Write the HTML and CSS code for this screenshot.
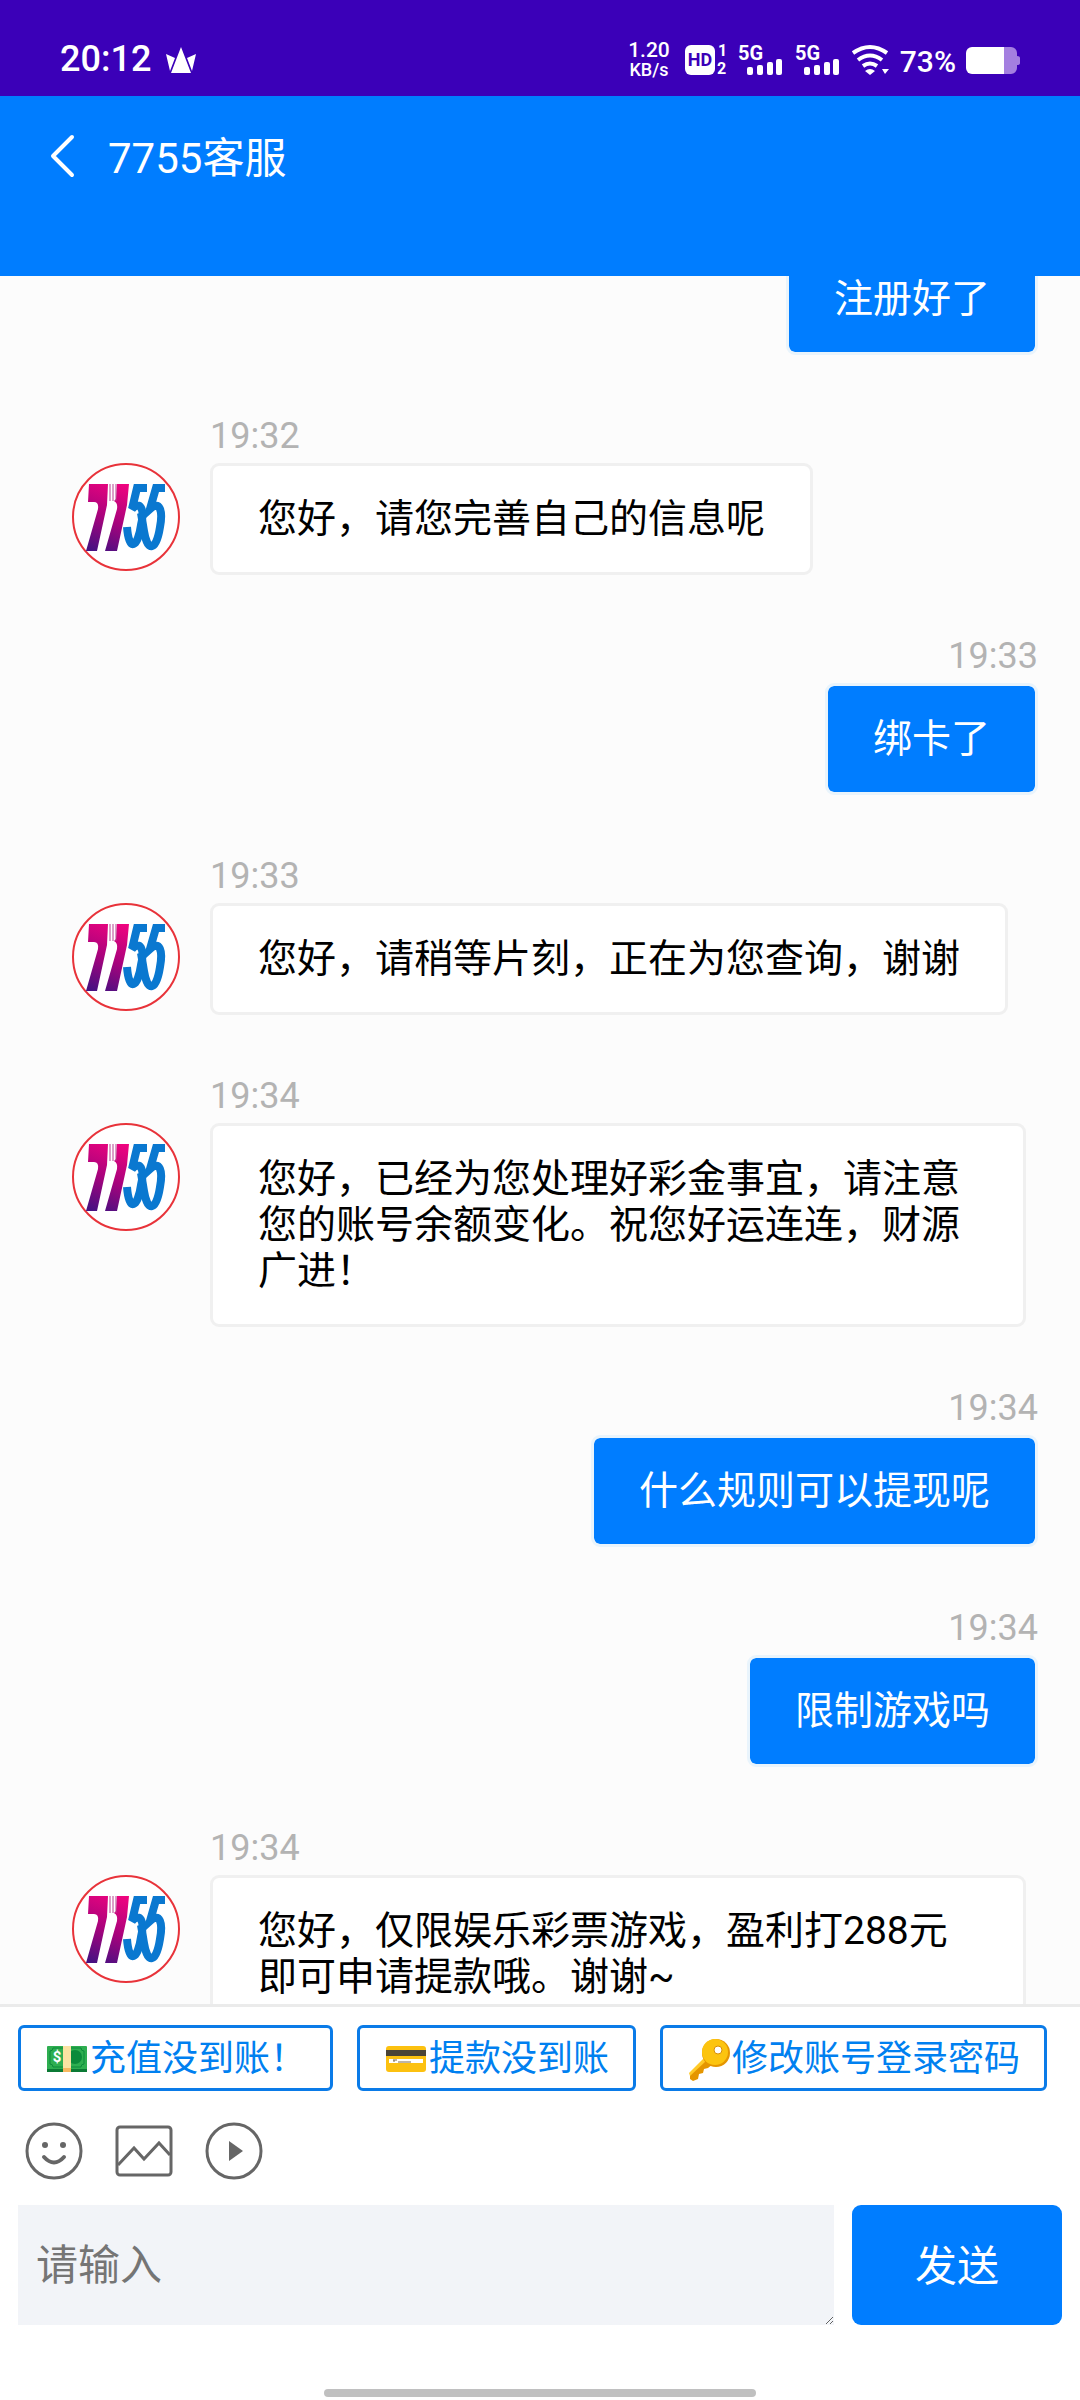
FILE: index.html
```html
<!DOCTYPE html>
<html lang="zh-CN">
<head>
    <meta charset="UTF-8">
    <meta name="viewport" content="width=device-width, initial-scale=1.0">
    <title>7755客服</title>
    <link rel="stylesheet" href="styles.css">
</head>
<body>
    <!-- Shared avatar and signal drawings -->
    <svg class="sprite" aria-hidden="true">
        <defs>
            <linearGradient id="magenta" gradientUnits="userSpaceOnUse" x1="50" y1="20" x2="22" y2="92">
                <stop offset="0" stop-color="#f0047f"/>
                <stop offset="0.5" stop-color="#a8037c"/>
                <stop offset="1" stop-color="#3c1282"/>
            </linearGradient>
            <symbol id="logo" viewBox="0 0 108 108">
                <circle cx="54" cy="54" r="53" fill="#fff" stroke="#e8333a" stroke-width="2"/>
                <path d="M17 21H36L35 42L25 88H14L26 46Q27 39 22 39H16Z" fill="url(#magenta)"/>
                <path d="M45 21H57L55 42L45 88H33L45 46Q46 40 42 38L44 36Z" fill="url(#magenta)"/>
                <path d="M38 21V38M41 21V38M44 21V38" stroke="#b8408f" stroke-width="1"/>
                <path d="M75 25H65L60 46C68 37 73 46 69 62C66 84 57 90 55 64" fill="none" stroke="#0a78d0" stroke-width="8"/>
                <path d="M93 25H84L78 46C88 37 91 48 88 64C84 90 75 88 72 68L69 50" fill="none" stroke="#0a78d0" stroke-width="8"/>
            </symbol>
            <symbol id="signal" viewBox="0 0 45 32">
                <text class="signal-text" x="0" y="16">5G</text>
                <g fill="#fff">
                    <rect x="9" y="23" width="6" height="8" rx="2"/>
                    <rect x="19" y="21" width="6" height="10" rx="2"/>
                    <rect x="29" y="18" width="6" height="13" rx="2"/>
                    <rect x="38" y="15" width="6" height="16" rx="2"/>
                </g>
            </symbol>
        </defs>
    </svg>

    <div class="screen">
        <div class="status-bar">
            <span class="clock">20:12</span>
            <svg class="crown" viewBox="0 0 32 26" aria-hidden="true">
                <path d="M16 0L26 26H6Z M1 7L10 11L5 24Z M31 7L22 11L27 24Z" fill="#fff"/>
            </svg>
            <div class="status-icons">
                <div class="speed"><span class="speed-value">1.20</span><span class="speed-unit">KB/s</span></div>
                <svg class="hd" viewBox="0 0 43 32" aria-hidden="true">
                    <rect x="0" y="1" width="30" height="30" rx="6" fill="#fff"/>
                    <text class="hd-text" x="15" y="22" text-anchor="middle">HD</text>
                    <text class="sim-text" x="33" y="12">1</text>
                    <text class="sim-text" x="32" y="30">2</text>
                </svg>
                <svg class="signal" aria-hidden="true"><use href="#signal"/></svg>
                <svg class="signal" aria-hidden="true"><use href="#signal"/></svg>
                <svg class="wifi" viewBox="0 0 38 32" aria-hidden="true">
                    <g fill="none" stroke="#fff" stroke-width="4">
                        <path d="M1 9Q18 -3 35 9"/>
                        <path d="M6 16Q18 7 30 16"/>
                        <path d="M11 22Q18 17 25 22"/>
                    </g>
                    <path d="M13 27Q18 23 23 27L18 31Z M30 25H37L33 30Z" fill="#fff"/>
                </svg>
                <span class="percent">73%</span>
                <svg class="battery" viewBox="0 0 54 27" aria-hidden="true">
                    <path d="M38 0H45A6 6 0 0 1 51 6V9Q54 9 54 11V16Q54 18 51 18V21A6 6 0 0 1 45 27H38Z" fill="#a47fe0"/>
                    <path d="M6 0H38V27H6A6 6 0 0 1 0 21V6A6 6 0 0 1 6 0Z" fill="#fff"/>
                </svg>
            </div>
        </div>

        <header class="header">
            <a class="back" href="#" aria-label="返回">
                <svg viewBox="0 0 24 42" aria-hidden="true"><path d="M21 2L2 21L21 40" fill="none" stroke="#fff" stroke-width="4" stroke-linecap="round" stroke-linejoin="round"/></svg>
            </a>
            <h1>7755客服</h1>
        </header>

        <main class="chat" id="chat">
            <div class="message sent">
                <p class="bubble">注册好了</p>
            </div>
            <div class="message">
                <svg class="avatar" aria-hidden="true"><use href="#logo"/></svg>
                <time>19:32</time>
                <p class="bubble">您好，请您完善自己的信息呢</p>
            </div>
            <div class="message sent">
                <time>19:33</time>
                <p class="bubble">绑卡了</p>
            </div>
            <div class="message">
                <svg class="avatar" aria-hidden="true"><use href="#logo"/></svg>
                <time>19:33</time>
                <p class="bubble">您好，请稍等片刻，正在为您查询，谢谢</p>
            </div>
            <div class="message">
                <svg class="avatar" aria-hidden="true"><use href="#logo"/></svg>
                <time>19:34</time>
                <p class="bubble">您好，已经为您处理好彩金事宜，请注意您的账号余额变化。祝您好运连连，财源广进！</p>
            </div>
            <div class="message sent">
                <time>19:34</time>
                <p class="bubble">什么规则可以提现呢</p>
            </div>
            <div class="message sent">
                <time>19:34</time>
                <p class="bubble">限制游戏吗</p>
            </div>
            <div class="message">
                <svg class="avatar" aria-hidden="true"><use href="#logo"/></svg>
                <time>19:34</time>
                <p class="bubble">您好，仅限娱乐彩票游戏，盈利打288元即可申请提款哦。谢谢~</p>
            </div>
        </main>

        <footer class="composer">
            <div class="quick-replies">
                <button type="button">
                    <svg viewBox="0 0 45 42" aria-hidden="true">
                        <rect x="2" y="8" width="40" height="26" rx="1" fill="#2eae50"/>
                        <path d="M2 31H42V34H2Z" fill="#0b7a35"/>
                        <path d="M8 10H36Q36 13 39 13V26Q36 26 36 29H8Q8 26 5 26V13Q8 13 8 10Z" fill="none" stroke="#0b8a3a" stroke-width="1"/>
                        <circle cx="30" cy="19" r="7" fill="#0b8a3a"/>
                        <rect x="18" y="8" width="8" height="26" fill="#fbe3a2"/>
                        <rect x="18" y="30" width="8" height="4" fill="#f7b860"/>
                        <text class="dollar" x="12" y="24" text-anchor="middle">$</text>
                    </svg>充值没到账！
                </button>
                <button type="button">
                    <svg viewBox="0 0 45 42" aria-hidden="true">
                        <rect x="2" y="8" width="40" height="26" rx="3" fill="#fcc110"/>
                        <rect x="2" y="12" width="40" height="6" fill="#4a4336"/>
                        <rect x="5" y="21" width="34" height="4" fill="#fff"/>
                        <path d="M9 22H13M10 22V24M14 24H27" stroke="#7a6a50" stroke-width="1"/>
                    </svg>提款没到账
                </button>
                <button type="button">
                    <svg viewBox="0 0 45 42" aria-hidden="true">
                        <path d="M17 22L3 36V41L6 43L11 41L12 36L16 35L17 31L21 30L26 26Z" fill="#e59600"/>
                        <path d="M17 20L2 35L3 38L19 23Z" fill="#ffca28"/>
                        <circle cx="29" cy="15" r="14" fill="#e59600"/>
                        <circle cx="28" cy="14" r="13" fill="#fcc40f"/>
                        <circle cx="31" cy="12" r="4" fill="#fff" stroke="#d98e00" stroke-width="1"/>
                    </svg>修改账号登录密码
                </button>
            </div>

            <div class="tools">
                <button type="button" aria-label="表情">
                    <svg viewBox="0 0 60 60" aria-hidden="true">
                        <circle cx="30" cy="30" r="27" fill="none" stroke="#666" stroke-width="3"/>
                        <circle cx="21" cy="24" r="3" fill="#666"/>
                        <circle cx="39" cy="24" r="3" fill="#666"/>
                        <path d="M20 36Q30 47 40 36" fill="none" stroke="#666" stroke-width="4" stroke-linecap="round"/>
                    </svg>
                </button>
                <button type="button" aria-label="图片">
                    <svg viewBox="0 0 60 60" aria-hidden="true">
                        <rect x="3" y="6" width="54" height="48" rx="3" fill="none" stroke="#666" stroke-width="3"/>
                        <path d="M4 44L20 27L30 38L45 22L56 34" fill="none" stroke="#666" stroke-width="3"/>
                    </svg>
                </button>
                <button type="button" aria-label="视频">
                    <svg viewBox="0 0 60 60" aria-hidden="true">
                        <circle cx="30" cy="30" r="27" fill="none" stroke="#666" stroke-width="3"/>
                        <path d="M25 20L39 30L25 40Z" fill="#666"/>
                    </svg>
                </button>
            </div>

            <form class="input-row">
                <textarea placeholder="请输入" aria-label="请输入"></textarea>
                <button type="button" class="send">发送</button>
            </form>
            <div class="home-bar"></div>
        </footer>
    </div>

    <script>
        // Keep the conversation scrolled past the top of the first bubble
        document.getElementById('chat').scrollTop = 33;
    </script>
</body>
</html>
```
FILE: styles.css
```css
:root {
    --primary-color: #007dff;
    --status-color: #3b00b8;
    --background-color: #fcfcfc;
    --border-color: #f0f0f0;
    --time-color: #b3b3b3;
}

* {
    box-sizing: border-box;
}

body {
    margin: 0;
    font-family: Roboto, "Noto Sans CJK SC", sans-serif;
    background-color: var(--background-color);
    color: #000;
}

button,
textarea {
    font-family: inherit;
    border: none;
}

svg {
    display: block;
    flex: none;
    overflow: visible;
}

.sprite {
    position: absolute;
    width: 0;
    height: 0;
}

.screen {
    display: flex;
    flex-direction: column;
    height: 100vh;
}

/* Status bar */
.status-bar {
    display: flex;
    align-items: center;
    height: 96px;
    padding: 24px 60px 0;
    background-color: var(--status-color);
    color: #fff;
    font-weight: 500;
}

.clock {
    font-size: 36px;
    line-height: 42px;
    padding-bottom: 2px;
}

.crown {
    width: 32px;
    height: 26px;
    margin-left: 14px;
}

.status-icons {
    display: flex;
    align-items: center;
    margin-left: auto;
}

.speed {
    display: flex;
    flex-direction: column;
    align-items: center;
    margin-right: 15px;
}

.speed-value {
    font-size: 21px;
    line-height: 19px;
}

.speed-unit {
    font-size: 18px;
    line-height: 19px;
}

.hd {
    width: 43px;
    height: 32px;
    margin-right: 10px;
}

.hd-text {
    font-size: 18px;
    font-weight: 700;
    fill: var(--status-color);
}

.sim-text {
    font-size: 16px;
    font-weight: 700;
    fill: #fff;
}

.signal {
    width: 45px;
    height: 32px;
    margin-right: 12px;
}

.signal-text {
    font-size: 20px;
    font-weight: 700;
    fill: #fff;
}

.wifi {
    width: 38px;
    height: 32px;
    margin-right: 10px;
}

.percent {
    font-size: 30px;
    line-height: 36px;
    margin-right: 10px;
    padding-top: 4px;
}

.battery {
    width: 54px;
    height: 27px;
}

/* Header */
.header {
    display: flex;
    align-items: flex-start;
    gap: 33px;
    height: 180px;
    padding: 36px 51px;
    background-color: var(--primary-color);
    color: #fff;
}

.back {
    padding-top: 3px;
}

.back svg {
    width: 24px;
    height: 42px;
}

.header h1 {
    margin: 0;
    font-size: 42px;
    font-weight: 400;
    line-height: 54px;
}

/* Conversation */
.chat {
    flex: 1;
    min-height: 0;
    overflow-y: auto;
    scrollbar-width: none;
}

.message {
    display: grid;
    grid-template-columns: 108px 1fr;
    column-gap: 30px;
    row-gap: 6px;
    justify-items: start;
    padding: 0 54px 0 72px;
    margin-bottom: 60px;
}

.message time {
    grid-column: 2;
    font-size: 36px;
    line-height: 42px;
    color: var(--time-color);
}

.avatar {
    grid-row: 2;
    width: 108px;
    height: 108px;
}

.bubble {
    grid-column: 2;
    margin: 0;
    padding: 30px 45px;
    font-size: 39px;
    line-height: 46px;
    background-color: #fff;
    border: 3px solid var(--border-color);
    border-radius: 9px;
}

.sent {
    justify-items: end;
    padding-right: 42px;
}

.sent .bubble {
    background-color: var(--primary-color);
    background-clip: padding-box;
    border-color: #e9f4fc;
    color: #fff;
}

/* Composer */
.composer {
    display: flex;
    flex-direction: column;
    padding: 18px 18px 3px;
    background-color: #fff;
    border-top: 3px solid #ebebeb;
}

.quick-replies {
    display: flex;
    gap: 24px;
}

.quick-replies button {
    display: flex;
    padding: 10px 24px 8px;
    font-size: 36px;
    line-height: 42px;
    white-space: nowrap;
    color: #0080f0;
    background-color: #fff;
    border: 3px solid #0a7be8;
    border-radius: 6px;
}

.quick-replies svg {
    width: 45px;
    height: 42px;
}

.dollar {
    font-size: 15px;
    font-weight: 700;
    fill: #fff;
}

.tools {
    display: flex;
    gap: 30px;
    padding: 30px 6px 24px;
}

.tools button {
    padding: 0;
    background: none;
}

.tools svg {
    width: 60px;
    height: 60px;
}

.input-row {
    display: flex;
    gap: 18px;
    height: 120px;
    margin-bottom: 64px;
}

.input-row textarea {
    flex: 1;
    min-width: 0;
    padding: 37px 18px;
    font-size: 42px;
    line-height: 48px;
    background-color: #f2f4f8;
}

.input-row textarea::placeholder {
    color: #757575;
}

.send {
    width: 210px;
    padding: 0 0 6px;
    font-size: 42px;
    color: #fff;
    background-color: var(--primary-color);
    border-radius: 9px;
}

.home-bar {
    width: 432px;
    height: 8px;
    margin: 0 auto;
    background-color: #c0c0c0;
    border-radius: 4px;
}
```
